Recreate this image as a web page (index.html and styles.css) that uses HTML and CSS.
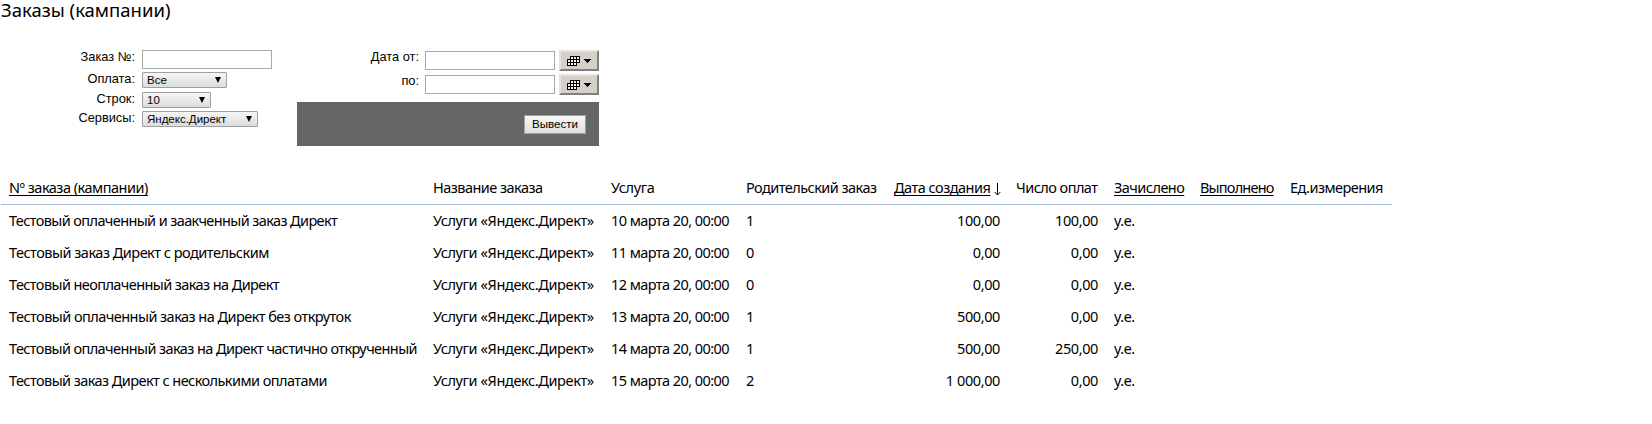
FILE: index.html
```
<!DOCTYPE html>
<html lang="ru">
<head>
<meta charset="utf-8">
<title>Заказы (кампании)</title>
<link rel="stylesheet" href="styles.css">
</head>
<body>
<svg class="defs" width="0" height="0">
  <symbol id="cal" viewBox="0 0 24 10">
    <path fill="#f4f2ec" d="M3 0h10v7h-3v3H0V3h3z"/>
    <path fill="#000" d="M3 0h10v1H3zM0 3h13v1H0zM0 6h13v1H0zM0 9h10v1H0zM0 3h1v7H0zM3 0h1v10H3zM6 0h1v10H6zM9 0h1v10H9zM12 0h1v7h-1z"/>
    <path fill="#000" d="M17 3h7v1h-1v1h-1v1h-1v1h-1V6h-1V5h-1V4h-1z"/>
  </symbol>
</svg>
<h1 class="title">Заказы (кампании)</h1>
<form class="filters">
  <div class="left">
    <label class="row r-order"><span class="label">Заказ №:</span><input class="input" type="text"></label>
    <div class="row r-pay"><span class="label">Оплата:</span><span class="select s-pay">Все<i class="caret"></i></span></div>
    <div class="row r-lines"><span class="label">Строк:</span><span class="select s-lines">10<i class="caret"></i></span></div>
    <div class="row r-serv"><span class="label">Сервисы:</span><span class="select s-serv">Яндекс.Директ<i class="caret"></i></span></div>
  </div>
  <div class="right">
    <div class="date"><span class="label">Дата от:</span><input class="input" type="text"><button class="cal" type="button"><svg width="24" height="10"><use href="#cal"/></svg></button></div>
    <div class="date"><span class="label">по:</span><input class="input" type="text"><button class="cal" type="button"><svg width="24" height="10"><use href="#cal"/></svg></button></div>
    <div class="bar"><button class="submit" type="button">Вывести</button></div>
  </div>
</form>
<table class="orders">
  <colgroup><col class="c1"><col class="c2"><col class="c3"><col class="c4"><col class="c5"><col class="c6"><col class="c7"><col class="c8"><col class="c9"></colgroup>
  <thead>
    <tr>
      <th><a class="link k50">Nº заказа (кампании)</a></th><th class="k54">Название заказа</th><th class="k35">Услуга</th><th class="k54">Родительский заказ</th>
      <th><a class="link k50">Дата создания</a><svg class="sort" width="7" height="13" viewBox="0 0 7 13"><path d="M3.5 0v12M.7 9l2.8 3 2.8-3" fill="none" stroke="#000"/></svg></th>
      <th class="k54">Число оплат</th><th><a class="link k54">Зачислено</a></th><th><a class="link k80">Выполнено</a></th><th class="k54">Ед.измерения</th>
    </tr>
  </thead>
  <tbody>
    <tr><td class="k62">Тестовый оплаченный и заакченный заказ Директ</td><td class="k38">Услуги «Яндекс.Директ»</td><td class="k56">10 марта 20, 00:00</td><td>1</td><td class="num">100,00</td><td class="num">100,00</td><td class="k50">у.е.</td><td></td><td></td></tr>
    <tr><td class="k50">Тестовый заказ Директ с родительским</td><td class="k38">Услуги «Яндекс.Директ»</td><td class="k56">11 марта 20, 00:00</td><td>0</td><td class="num">0,00</td><td class="num">0,00</td><td class="k50">у.е.</td><td></td><td></td></tr>
    <tr><td class="k60">Тестовый неоплаченный заказ на Директ</td><td class="k38">Услуги «Яндекс.Директ»</td><td class="k56">12 марта 20, 00:00</td><td>0</td><td class="num">0,00</td><td class="num">0,00</td><td class="k50">у.е.</td><td></td><td></td></tr>
    <tr><td class="k54">Тестовый оплаченный заказ на Директ без откруток</td><td class="k38">Услуги «Яндекс.Директ»</td><td class="k56">13 марта 20, 00:00</td><td>1</td><td class="num">500,00</td><td class="num">0,00</td><td class="k50">у.е.</td><td></td><td></td></tr>
    <tr><td class="k60">Тестовый оплаченный заказ на Директ частично открученный</td><td class="k38">Услуги «Яндекс.Директ»</td><td class="k56">14 марта 20, 00:00</td><td>1</td><td class="num">500,00</td><td class="num">250,00</td><td class="k50">у.е.</td><td></td><td></td></tr>
    <tr><td class="k56">Тестовый заказ Директ с несколькими оплатами</td><td class="k38">Услуги «Яндекс.Директ»</td><td class="k56">15 марта 20, 00:00</td><td>2</td><td class="num">1 000,00</td><td class="num">0,00</td><td class="k50">у.е.</td><td></td><td></td></tr>
  </tbody>
</table>
</body>
</html>
```

FILE: styles.css
```
* { box-sizing: border-box; }
body {
  margin: 0;
  background: #fff;
  color: #000;
  font-family: "Noto Sans", sans-serif;
  overflow: hidden;
}
.defs { display: block; }
.title {
  margin: 0;
  padding-left: 1px;
  height: 50px;
  font-size: 18.5px;
  font-weight: 400;
  line-height: 19px;
}

/* Filter form */
.filters {
  display: flex;
  height: 121px;
  font: 12.8px/15px "Liberation Sans", Arial, sans-serif;
}
.left { width: 297px; }
.right { width: 302px; }
.row, .date { display: flex; align-items: flex-start; }
.label { margin-top: -1px; text-align: right; }
.left .label { width: 135px; margin-right: 7px; }
.r-order { height: 22px; }
.r-pay { height: 20px; }
.r-lines { height: 19px; }
.input {
  width: 130px;
  height: 19px;
  padding: 0 3px;
  border: 1px solid #a9a9a9;
  background: #fff;
}
.select {
  display: flex;
  align-items: center;
  justify-content: space-between;
  height: 16px;
  padding: 0 5px 0 4px;
  border: 1px solid #a0a0a0;
  border-radius: 1px;
  background: linear-gradient(#f6f6f6, #dcdcdc);
  font-size: 11.5px;
}
.s-pay { width: 85px; }
.s-lines { width: 69px; }
.s-serv { width: 116px; }
.caret {
  border: 3px solid transparent;
  border-top: 6px solid #000;
  border-bottom: 0;
}
.date { height: 24px; }
.date .label { width: 122px; margin: -1px 6px 0 0; }
.date .input { margin: 1px 4px 0 0; }
.cal {
  display: flex;
  align-items: center;
  justify-content: center;
  width: 40px;
  height: 21px;
  padding: 0;
  border: 2px solid;
  border-color: #e2e2e2 #808080 #808080 #e2e2e2;
  background: #d4d0c8;
}
.bar {
  display: flex;
  justify-content: flex-end;
  height: 44px;
  margin-top: 4px;
  padding: 13px 13px 0 0;
  background: #666;
}
.submit {
  width: 62px;
  height: 19px;
  padding: 0 0 2px;
  border: 1px solid #a0a0a0;
  background: linear-gradient(#f8f8f8, #dddddd);
  color: #000;
  font: 11.6px/15px "Liberation Sans", Arial, sans-serif;
}

/* Orders table */
.orders {
  width: 1391px;
  margin-left: 1px;
  border-collapse: collapse;
  table-layout: fixed;
  font-size: 14.5px;
  line-height: 20px;
}
.c1 { width: 424px; }
.c2 { width: 178px; }
.c3 { width: 135px; }
.c4 { width: 148px; }
.c5 { width: 122px; }
.c6 { width: 98px; }
.c7 { width: 86px; }
.c8 { width: 90px; }
.c9 { width: 110px; }
.orders th, .orders td {
  height: 32px;
  padding: 0 8px 1px;
  font-weight: 400;
  text-align: left;
  white-space: nowrap;
}
.orders th {
  height: 33px;
  padding-bottom: 0;
  border-bottom: 1px solid #aabbd8;
}
.orders .num { text-align: right; letter-spacing: -0.4px; }
.link { text-decoration: underline; text-underline-offset: 2px; text-decoration-thickness: 1px; }
.sort { margin-left: 4px; vertical-align: -3px; }
.k35 { letter-spacing: -0.35px; }
.k38 { letter-spacing: -0.38px; }
.k50 { letter-spacing: -0.5px; }
.k54 { letter-spacing: -0.54px; }
.k56 { letter-spacing: -0.56px; }
.k60 { letter-spacing: -0.59px; }
.k62 { letter-spacing: -0.61px; }
.k80 { letter-spacing: -0.8px; }
```
